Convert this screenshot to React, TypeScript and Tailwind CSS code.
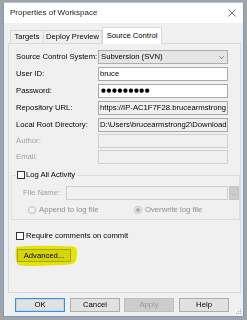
import React from "react";

function Field({
  children,
  variant = "normal",
}: {
  children?: React.ReactNode;
  variant?: "normal" | "readonly" | "disabled";
}) {
  const cls =
    variant === "normal"
      ? "bg-white border-[#a9a9a9]"
      : variant === "readonly"
      ? "bg-[#f0f0f0] border-[#a9a9a9]"
      : "bg-[#f0f0f0] border-[#cfcfcf]";
  return (
    <div
      className={`w-[130px] h-[14px] border ${cls} flex items-center pl-[1px] overflow-hidden whitespace-nowrap`}
    >
      {children}
    </div>
  );
}

function Row({
  label,
  disabled,
  mt,
  children,
}: {
  label: string;
  disabled?: boolean;
  mt: string;
  children: React.ReactNode;
}) {
  return (
    <div className={`flex items-center ${mt}`}>
      <div className={`w-[82px] ${disabled ? "text-[#a2a2a2]" : "text-black"}`}>{label}</div>
      {children}
    </div>
  );
}

export default function App() {
  return (
    <div className="w-[247px] h-[320px] bg-[#a3a3a3] pt-[2px] pl-[3px] pr-[3px] pb-[3px] font-['Liberation_Sans',Arial,sans-serif] text-[7.7px] leading-none text-black">
      <div className="relative w-[241px] h-[315px] border border-[#6d9bd6] border-t-[#a9c6ea] bg-[#f0f0f0] flex flex-col">
        {/* Title bar */}
        <div className="h-[20px] shrink-0 bg-white flex items-center pl-[6px] pr-[7px]">
          <span className="flex-1 text-[8px] text-[#1b1b1b]">Properties of Workspace</span>
          <svg width="8" height="8" viewBox="0 0 8 8">
            <path d="M0.5 0.5L7.5 7.5M7.5 0.5L0.5 7.5" stroke="#444" strokeWidth="0.8" />
          </svg>
        </div>

        {/* Tabs */}
        <div className="mt-[4px] h-[16px] flex items-end pl-[6px] text-[7.6px]">
          <div className="w-[34px] h-[13px] border-l border-t border-r border-[#d9d9d9] bg-[#f0f0f0] flex items-center justify-center">
            Targets
          </div>
          <div className="w-[58px] h-[13px] border-t border-r border-[#d9d9d9] bg-[#f0f0f0] flex items-center justify-center">
            Deploy Preview
          </div>
          <div className="relative z-10 -mb-[1px] w-[60px] h-[17px] border-l border-t border-r border-[#d9d9d9] bg-white flex items-center justify-center pb-[1px]">
            Source Control
          </div>
        </div>

        {/* Panel */}
        <div className="relative ml-[4px] w-[233px] h-[250px] border border-[#d9d9d9] bg-[#f0f0f0] flex flex-col pt-[6px] pl-[7px]">
          <Row label="Source Control System:" mt="mt-0">
            <div className="w-[130px] h-[14px] border border-[#adadad] bg-[#e5e5e5] flex items-center pl-[2px] pr-[3px]">
              <span className="flex-1">Subversion (SVN)</span>
              <svg width="5" height="3" viewBox="0 0 5 3">
                <path d="M0.3 0.3L2.5 2.6L4.7 0.3" stroke="#555" strokeWidth="0.7" fill="none" />
              </svg>
            </div>
          </Row>
          <Row label="User ID:" mt="mt-[3px]">
            <Field>bruce</Field>
          </Row>
          <Row label="Password:" mt="mt-[3px]">
            <Field>
              <span className="font-['DejaVu_Sans',sans-serif] text-[5.6px] tracking-[0.6px] pl-[1px]">
                ●●●●●●●●●
              </span>
            </Field>
          </Row>
          <Row label="Repository URL:" mt="mt-[3px]">
            <Field variant="readonly">https://IP-AC1F7F28.brucearmstrong</Field>
          </Row>
          <Row label="Local Root Directory:" mt="mt-[3px]">
            <Field variant="readonly">D:\Users\brucearmstrong2\Downloads</Field>
          </Row>
          <Row label="Author:" disabled mt="mt-[2px]">
            <Field variant="disabled" />
          </Row>
          <Row label="Email:" disabled mt="mt-[2px]">
            <Field variant="disabled" />
          </Row>

          {/* Group box */}
          <div className="relative mt-[11px] -ml-[5px] w-[229px] h-[45px] border border-[#dcdcdc] flex flex-col pt-[10px] pl-[11px]">
            <div className="absolute -top-[5px] left-[4px] bg-[#f0f0f0] pl-[1px] pr-[2px] flex items-center">
              <div className="w-[8px] h-[8px] border border-[#333] bg-white" />
              <span className="ml-[1px]">Log All Activity</span>
            </div>
            <div className="flex items-center">
              <div className="w-[43px] text-[#a2a2a2]">File Name:</div>
              <div className="w-[162px] h-[14px] border border-[#cfcfcf] bg-[#f0f0f0]" />
              <div className="ml-[1px] w-[10px] h-[14px] bg-[#cccccc] border border-[#c4c4c4] flex items-center justify-center text-[#8a8a8a] text-[6px] pb-[1px]">
                ...
              </div>
            </div>
            <div className="mt-[6px] flex items-center pl-[5px] text-[#8e8e8e]">
              <div className="w-[106px] flex items-center">
                <div className="w-[8px] h-[8px] rounded-full border border-[#bcbcbc] bg-[#f4f4f4]" />
                <span className="ml-[3px]">Append to log file</span>
              </div>
              <div className="flex items-center">
                <div className="w-[8px] h-[8px] rounded-full border border-[#bcbcbc] bg-[#f4f4f4] flex items-center justify-center">
                  <div className="w-[4px] h-[4px] rounded-full bg-[#a6a6a6]" />
                </div>
                <span className="ml-[3px]">Overwrite log file</span>
              </div>
            </div>
          </div>

          <div className="mt-[12px] flex items-center">
            <div className="w-[8px] h-[8px] border border-[#333] bg-white" />
            <span className="ml-[2px]">Require comments on commit</span>
          </div>

          <div className="mt-[9px] ml-[1px] w-[54px] h-[13px] border border-[#adadad] bg-[#e1e1e1] flex items-center justify-center">
            Advanced...
          </div>

          {/* highlighter mark */}
          <svg
            className="absolute left-[4px] top-[200px] mix-blend-multiply pointer-events-none"
            width="66"
            height="24"
            viewBox="0 0 66 24"
          >
            <path
              d="M3 3 C 12 1, 50 1.5, 61 2.5 C 64 3, 64.5 8, 63.5 14 C 63 19, 60 20.5, 50 21 C 35 21.5, 15 22.5, 7 21.5 C 3 20.5, 2.5 14, 2.5 8 Z"
              fill="#f2f20a"
            />
          </svg>
        </div>

        {/* Bottom buttons */}
        <div className="mt-[5px] flex items-center pl-[11px]">
          <div className="w-[50px] h-[14px] border border-[#3f8de0] shadow-[inset_0_0_0_1px_#bcd6f3] bg-[#e1e1e1] flex items-center justify-center">
            OK
          </div>
          <div className="ml-[5px] w-[50px] h-[14px] border border-[#adadad] bg-[#e1e1e1] flex items-center justify-center">
            Cancel
          </div>
          <div className="ml-[4px] w-[50px] h-[14px] border border-[#bfbfbf] bg-[#cccccc] text-[#9a9a9a] flex items-center justify-center">
            Apply
          </div>
          <div className="ml-[5px] w-[50px] h-[14px] border border-[#adadad] bg-[#e1e1e1] flex items-center justify-center">
            Help
          </div>
        </div>

        {/* resize grip */}
        <svg className="absolute right-[1px] bottom-[1px]" width="7" height="7" viewBox="0 0 7 7">
          <g fill="#a8a8a8">
            <rect x="5" y="1" width="1" height="1" />
            <rect x="3" y="3" width="1" height="1" />
            <rect x="5" y="3" width="1" height="1" />
            <rect x="1" y="5" width="1" height="1" />
            <rect x="3" y="5" width="1" height="1" />
            <rect x="5" y="5" width="1" height="1" />
          </g>
        </svg>
      </div>
    </div>
  );
}
